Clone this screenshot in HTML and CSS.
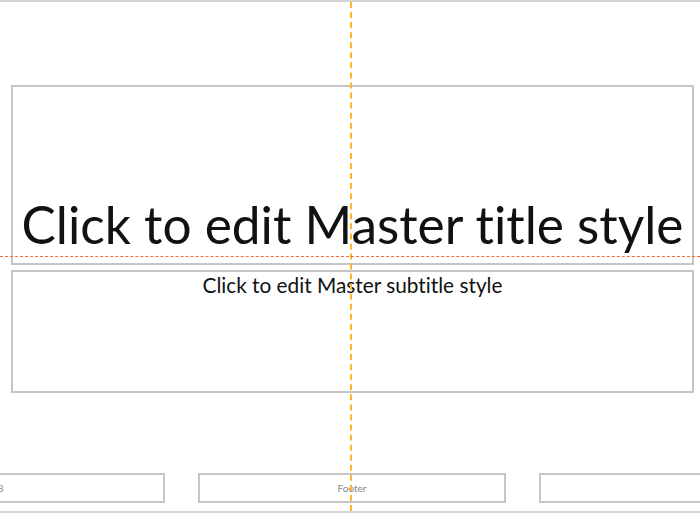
FILE: index.html
```html
<!DOCTYPE html>
<html lang="en">
<head>
    <meta charset="UTF-8">
    <meta name="viewport" content="width=device-width, initial-scale=1.0">
    <title>Slide Master</title>
    <link rel="stylesheet" href="styles.css">
</head>
<body>
    <div class="slide">
        <div class="placeholder title-box">
            <div class="title">Click to edit Master title style</div>
        </div>

        <div class="placeholder subtitle-box">
            <div class="subtitle">Click to edit Master subtitle style</div>
        </div>

        <div class="footer-row">
            <div class="placeholder footer-box date-box">12/3/2018</div>
            <div class="placeholder footer-box center-box">Footer</div>
            <div class="placeholder footer-box number-box"></div>
        </div>

        <!-- smart guides -->
        <div class="guide guide-v"></div>
        <div class="guide guide-h"></div>
    </div>
</body>
</html>
```

FILE: styles.css
```css
body {
    margin: 0;
    padding: 0;
    background-color: #ffffff;
    font-family: Lato, "Open Sans", sans-serif;
    font-variant-ligatures: none;
    overflow: hidden;
}

.slide {
    position: relative;
    height: 513px;
    border-top: 2px solid #d4d4d4;
    border-bottom: 2px solid #d4d4d4;
    padding-top: 83px;
    box-sizing: border-box;
    display: flex;
    flex-direction: column;
    overflow: hidden;
}

.placeholder {
    border: 2px solid #c6c6c6;
    box-sizing: border-box;
    background-color: #ffffff;
    flex-shrink: 0;
}

.title-box {
    margin-left: 11px;
    width: 683px;
    height: 180px;
    display: flex;
    align-items: flex-end;
    justify-content: center;
}

.title {
    font-size: 51.4px;
    color: #111;
    line-height: 1;
    padding-bottom: 13px;
    white-space: nowrap;
}

.subtitle-box {
    margin-top: 5px;
    margin-left: 11px;
    width: 683px;
    height: 123px;
    display: flex;
    justify-content: center;
}

.subtitle {
    font-size: 20.8px;
    color: #111;
    white-space: nowrap;
}

.footer-row {
    margin-top: 80px;
    display: flex;
    gap: 33px;
}

.footer-box {
    height: 30px;
    font-size: 10px;
    color: #888;
    display: flex;
    align-items: center;
}

.date-box {
    margin-left: -110px;
    width: 275px;
    padding-left: 62px;
}

.center-box {
    width: 308px;
    justify-content: center;
}

.number-box {
    width: 200px;
}

.guide {
    position: absolute;
}

.guide-v {
    left: 350px;
    top: 0;
    bottom: 0;
    border-left: 2px dashed #ffb52e;
}

.guide-h {
    left: 0;
    right: 0;
    top: 254px;
    border-top: 1px dashed #f26b3a;
}
```
